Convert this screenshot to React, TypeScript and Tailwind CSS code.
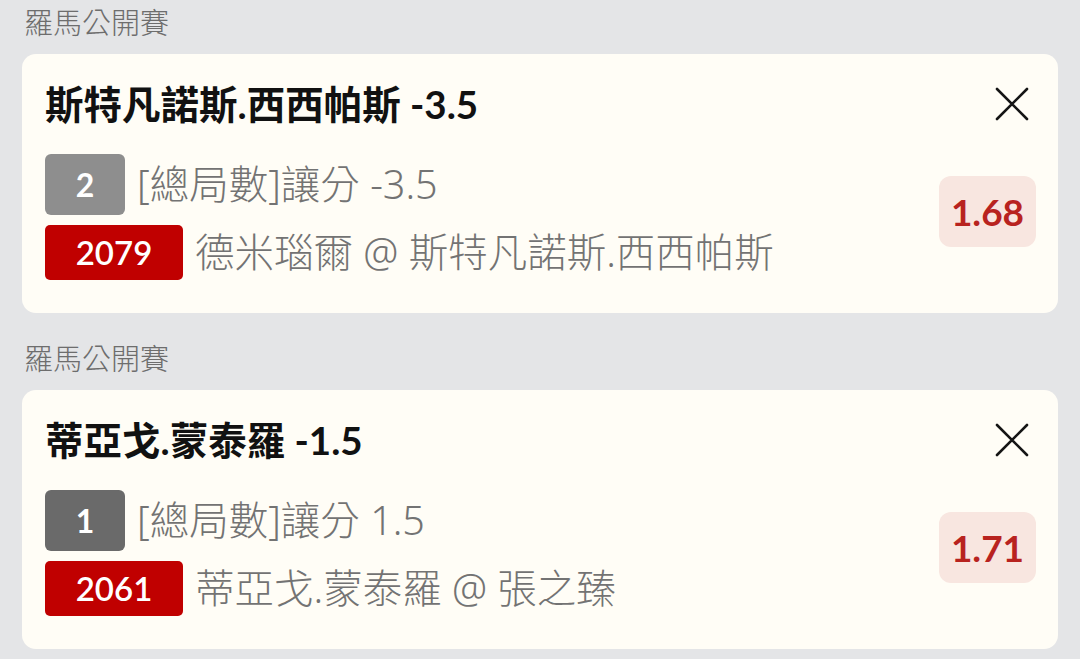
import React from 'react';

type Bet = {
  title: string;
  seq: string;
  seqBg: string;
  market: string;
  code: string;
  match: string;
  odds: string;
};

const bets: Bet[] = [
  {
    title: '斯特凡諾斯.西西帕斯 -3.5',
    seq: '2',
    seqBg: 'bg-[#8e8e8e]',
    market: '[總局數]讓分 -3.5',
    code: '2079',
    match: '德米瑙爾 @ 斯特凡諾斯.西西帕斯',
    odds: '1.68',
  },
  {
    title: '蒂亞戈.蒙泰羅 -1.5',
    seq: '1',
    seqBg: 'bg-[#6a6a6a]',
    market: '[總局數]讓分 1.5',
    code: '2061',
    match: '蒂亞戈.蒙泰羅 @ 張之臻',
    odds: '1.71',
  },
];

const latin = "font-['Lato','Noto_Sans_CJK_TC',sans-serif]";
const plain = "font-['Noto_Sans','Noto_Sans_CJK_TC',sans-serif]";

function CloseIcon() {
  return (
    <svg width="34" height="34" viewBox="0 0 34 34" className="mr-[7px]">
      <path d="M2 2L32 32M32 2L2 32" stroke="#151515" strokeWidth="2.6" strokeLinecap="round" />
    </svg>
  );
}

function BetCard({ bet }: { bet: Bet }) {
  return (
    <div className="bg-[#fffdf6] rounded-[14px] pt-[20px] pb-[33px] pl-[23px] pr-[22px]">
      {/* Title row */}
      <div className="h-[60px] flex items-center justify-between">
        <span className={`${latin} text-[38.5px] font-bold text-[#111] leading-none`}>{bet.title}</span>
        <CloseIcon />
      </div>

      <div className="mt-[20px] flex justify-between">
        <div className="flex flex-col gap-[10px]">
          <div className="flex items-center gap-[12px]">
            <div
              className={`${bet.seqBg} w-[80px] h-[61px] rounded-[6px] flex items-center justify-center text-white ${latin} text-[32px] font-bold`}
            >
              {bet.seq}
            </div>
            <span className={`${plain} text-[39.5px] font-light text-[#737373] leading-none`}>{bet.market}</span>
          </div>
          <div className="flex items-center gap-[12px]">
            <div
              className={`bg-[#c00000] w-[138px] h-[55px] rounded-[5px] flex items-center justify-center text-white ${latin} text-[33px] font-semibold`}
            >
              {bet.code}
            </div>
            <span className={`${plain} text-[39.5px] font-light text-[#737373] leading-none`}>{bet.match}</span>
          </div>
        </div>

        <div className="mt-[22px] self-start w-[97px] h-[71px] rounded-[12px] bg-[#f8e6e0] flex items-center justify-center">
          <span className={`${latin} text-[37px] font-bold text-[#b8231f] leading-none`}>{bet.odds}</span>
        </div>
      </div>
    </div>
  );
}

export default function App() {
  return (
    <div className="min-h-screen bg-[#e4e5e7] px-[22px] flex flex-col gap-[23px] overflow-hidden">
      {bets.map((bet, i) => (
        <div key={i}>
          <div className={`h-[44px] mb-[10px] flex items-center pl-[2px] ${plain} text-[29px] font-light text-[#6d6d6d] leading-none`}>
            羅馬公開賽
          </div>
          <BetCard bet={bet} />
        </div>
      ))}
    </div>
  );
}
